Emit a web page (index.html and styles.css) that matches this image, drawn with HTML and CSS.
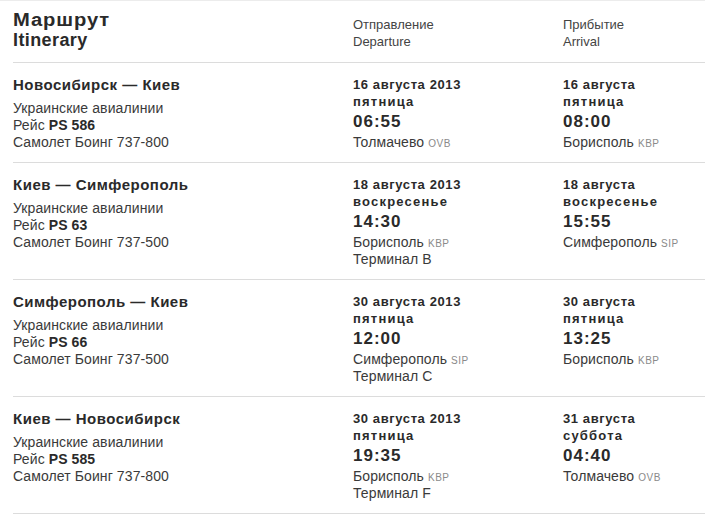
FILE: index.html
```html
<!DOCTYPE html>
<html lang="ru">
<head>
    <meta charset="UTF-8">
    <title>Маршрут / Itinerary</title>
    <link rel="stylesheet" href="styles.css">
</head>
<body>
    <div class="itinerary">
        <div class="row head">
            <div class="cell main">
                <div class="head-title"><span class="head-ru">Маршрут</span></div>
                <div class="head-title">Itinerary</div>
            </div>
            <div class="cell time-col">
                <div class="head-label">Отправление</div>
                <div class="head-label">Departure</div>
            </div>
            <div class="cell time-col">
                <div class="head-label">Прибытие</div>
                <div class="head-label">Arrival</div>
            </div>
        </div>

        <!-- Новосибирск - Киев -->
        <div class="row">
            <div class="cell main">
                <div class="route">Новосибирск — Киев</div>
                <div class="info">Украинские авиалинии</div>
                <div class="info">Рейс <b>PS 586</b></div>
                <div class="info">Самолет Боинг 737-800</div>
            </div>
            <div class="cell time-col">
                <div class="date">16 августа 2013</div>
                <div class="day">пятница</div>
                <div class="time">06:55</div>
                <div class="info">Толмачево <span class="code">OVB</span></div>
            </div>
            <div class="cell time-col">
                <div class="date">16 августа</div>
                <div class="day">пятница</div>
                <div class="time">08:00</div>
                <div class="info">Борисполь <span class="code">KBP</span></div>
            </div>
        </div>

        <!-- Киев - Симферополь -->
        <div class="row">
            <div class="cell main">
                <div class="route">Киев — Симферополь</div>
                <div class="info">Украинские авиалинии</div>
                <div class="info">Рейс <b>PS 63</b></div>
                <div class="info">Самолет Боинг 737-500</div>
            </div>
            <div class="cell time-col">
                <div class="date">18 августа 2013</div>
                <div class="day">воскресенье</div>
                <div class="time">14:30</div>
                <div class="info">Борисполь <span class="code">KBP</span></div>
                <div class="info">Терминал B</div>
            </div>
            <div class="cell time-col">
                <div class="date">18 августа</div>
                <div class="day">воскресенье</div>
                <div class="time">15:55</div>
                <div class="info">Симферополь <span class="code">SIP</span></div>
            </div>
        </div>

        <!-- Симферополь - Киев -->
        <div class="row">
            <div class="cell main">
                <div class="route">Симферополь — Киев</div>
                <div class="info">Украинские авиалинии</div>
                <div class="info">Рейс <b>PS 66</b></div>
                <div class="info">Самолет Боинг 737-500</div>
            </div>
            <div class="cell time-col">
                <div class="date">30 августа 2013</div>
                <div class="day">пятница</div>
                <div class="time">12:00</div>
                <div class="info">Симферополь <span class="code">SIP</span></div>
                <div class="info">Терминал C</div>
            </div>
            <div class="cell time-col">
                <div class="date">30 августа</div>
                <div class="day">пятница</div>
                <div class="time">13:25</div>
                <div class="info">Борисполь <span class="code">KBP</span></div>
            </div>
        </div>

        <!-- Киев - Новосибирск -->
        <div class="row">
            <div class="cell main">
                <div class="route">Киев — Новосибирск</div>
                <div class="info">Украинские авиалинии</div>
                <div class="info">Рейс <b>PS 585</b></div>
                <div class="info">Самолет Боинг 737-800</div>
            </div>
            <div class="cell time-col">
                <div class="date">30 августа 2013</div>
                <div class="day">пятница</div>
                <div class="time">19:35</div>
                <div class="info">Борисполь <span class="code">KBP</span></div>
                <div class="info">Терминал F</div>
            </div>
            <div class="cell time-col">
                <div class="date">31 августа</div>
                <div class="day">суббота</div>
                <div class="time">04:40</div>
                <div class="info">Толмачево <span class="code">OVB</span></div>
            </div>
        </div>
    </div>
</body>
</html>
```

FILE: styles.css
```css
body {
    margin: 0;
    font-family: 'Liberation Sans', Arial, sans-serif;
    background-color: #fff;
    color: #333;
}

.itinerary {
    width: 705px;
    border-top: 1px solid #ececec;
}

.row {
    display: grid;
    grid-template-columns: 340px 210px 1fr;
    margin-left: 13px;
    padding: 13px 0 11px;
    border-bottom: 1px solid #dcdcdc;
}

.head {
    padding: 9px 0 12px;
}

.head-title {
    font-size: 18px;
    line-height: 20px;
    font-weight: bold;
    color: #2a2a2a;
    letter-spacing: 0.4px;
}

/* cyrillic heading is drawn wider in the original */
.head-ru {
    display: inline-block;
    letter-spacing: 0.8px;
    transform: scaleX(1.12);
    transform-origin: left center;
}

.head .time-col {
    padding-top: 6px;
}

.head-label {
    font-size: 13px;
    line-height: 17px;
    color: #444;
}

.route {
    font-size: 15px;
    line-height: 18px;
    font-weight: bold;
    color: #2a2a2a;
    margin-bottom: 6px;
    letter-spacing: 0.5px;
}

.info {
    font-size: 14px;
    line-height: 17px;
    color: #3a3a3a;
    letter-spacing: 0.1px;
}

.info b {
    color: #2a2a2a;
}

.date,
.day {
    font-size: 13px;
    line-height: 17px;
    font-weight: bold;
    color: #2a2a2a;
    letter-spacing: 0.6px;
}

.day {
    letter-spacing: 1.2px;
}

.time {
    font-size: 17px;
    line-height: 24px;
    font-weight: bold;
    color: #2a2a2a;
    letter-spacing: 1px;
}

.code {
    font-size: 10px;
    line-height: 1;
    color: #8a8a8a;
    letter-spacing: 0.5px;
}
```
